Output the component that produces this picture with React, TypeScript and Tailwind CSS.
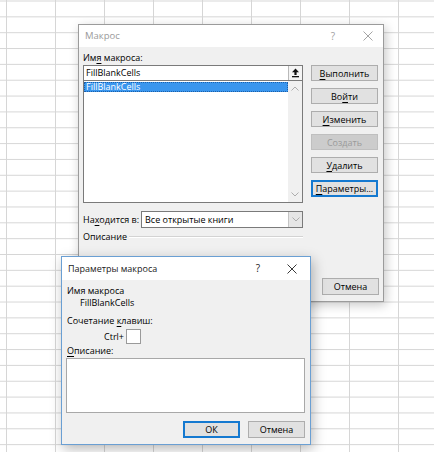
import clsx from "clsx";

/* Excel "Macro" dialog with the "Macro Options" child window on top of the sheet grid */

function U({ c }: { c: string }) {
  return <span className="underline underline-offset-[1.5px] decoration-[0.5px]">{c}</span>;
}

function Btn({
  children,
  disabled,
  focused,
  className,
}: {
  children: React.ReactNode;
  disabled?: boolean;
  focused?: boolean;
  className?: string;
}) {
  return (
    <div
      className={clsx(
        "flex items-center justify-center leading-none",
        disabled
          ? "bg-[#cccccc] border border-[#bfbfbf] text-[#9a9a9a]"
          : "bg-[#e1e1e1] text-black",
        !disabled && (focused ? "border-2 border-[#1479d0]" : "border border-[#adadad]"),
        className
      )}
    >
      {children}
    </div>
  );
}

function CloseX({ color }: { color: string }) {
  return (
    <svg width="10" height="10" viewBox="0 0 10 10">
      <path d="M0.5 0.5 L9.5 9.5 M9.5 0.5 L0.5 9.5" stroke={color} strokeWidth="0.9" fill="none" />
    </svg>
  );
}

function Chevron({ up }: { up?: boolean }) {
  return (
    <svg width="8" height="5" viewBox="0 0 8 5">
      <path
        d={up ? "M0.5 4.5 L4 1 L7.5 4.5" : "M0.5 0.5 L4 4 L7.5 0.5"}
        stroke="#adadad"
        strokeWidth="1"
        fill="none"
      />
    </svg>
  );
}

export default function App() {
  return (
    <div
      className="
        relative w-[434px] h-[452px] overflow-hidden bg-white
        font-['Open_Sans',sans-serif] text-[9px] text-black
        bg-[linear-gradient(to_right,#d6d6d6_1px,transparent_1px),linear-gradient(to_bottom,#d6d6d6_1px,transparent_1px)]
        bg-size-[49px_15.85px] bg-position-[6px_0.5px]
      "
    >
      {/* ================= MACRO DIALOG ================= */}
      <div className="absolute left-[78px] top-[24px] w-[306px] h-[278px] flex flex-col border border-[#9b9b9b] bg-[#f0f0f0] shadow-[2px_3px_10px_rgba(0,0,0,0.22)]">
        {/* title bar */}
        <div className="h-[22px] shrink-0 bg-white flex items-center pl-[6px] pr-[10px]">
          <span className="text-[9.5px] text-[#9a9a9a]">Макрос</span>
          <span className="ml-auto mr-[28px] text-[10px] text-[#a0a0a0]">?</span>
          <CloseX color="#9a9a9a" />
        </div>

        <div className="flex-1 flex flex-col px-[4px]">
          <div className="flex gap-[8px]">
            {/* left column */}
            <div className="w-[220px]">
              <div className="h-[13px] mt-[5px] leading-[12px]">
                Им<U c="я" /> макроса:
              </div>

              <div className="h-[16px] flex bg-white border border-[#7a7a7a]">
                <div className="flex-1 pl-[2px] leading-[14px]">FillBlankCells</div>
                <div className="w-[14px] flex items-center justify-center border-l border-[#b9b9b9] bg-[#f4f4f4]">
                  <svg width="9" height="10" viewBox="0 0 9 10">
                    <path d="M4.5 0.5 L8 4.2 L5.6 4.2 L5.6 7 L3.4 7 L3.4 4.2 L1 4.2 Z" fill="#111" />
                    <rect x="1" y="8" width="7" height="1.3" fill="#111" />
                  </svg>
                </div>
              </div>

              <div className="h-[122px] flex bg-white border border-t-0 border-[#7a7a7a]">
                <div className="flex-1 pt-[1px]">
                  <div className="h-[10px] leading-[10px] bg-[#3a96ee] text-white pl-[2px] outline-dotted outline-1 outline-[#1d5fa8] -outline-offset-1">
                    FillBlankCells
                  </div>
                </div>
                <div className="w-[14px] bg-[#f0f0f0] flex flex-col items-center justify-between py-[5px]">
                  <Chevron up />
                  <Chevron />
                </div>
              </div>

              <div className="mt-[8px] h-[17px] flex items-center">
                <span className="w-[58px]">
                  На<U c="х" />одится в:
                </span>
                <div className="flex-1 h-full flex bg-white border border-[#7a7a7a]">
                  <div className="flex-1 pl-[3px] leading-[15px]">Все открытые книги</div>
                  <div className="w-[14px] flex items-center justify-center bg-[#e6e6e6] border-l border-[#c4c4c4]">
                    <Chevron />
                  </div>
                </div>
              </div>

              <div className="mt-[3px] h-[12px] flex items-center gap-[2px]">
                <span>Описание</span>
                <div className="flex-1 h-[2px] border-t border-[#d3d3d3] border-b border-b-white" />
              </div>
            </div>

            {/* right column: actions */}
            <div className="w-[67px] pt-[18px] flex flex-col gap-[7px]">
              <Btn className="h-[16px]">
                <U c="В" />ыполнить
              </Btn>
              <Btn className="h-[16px]">
                Во<U c="й" />ти
              </Btn>
              <Btn className="h-[16px]">
                <U c="И" />зменить
              </Btn>
              <Btn className="h-[16px]" disabled>
                Создать
              </Btn>
              <Btn className="h-[16px]">
                <U c="У" />далить
              </Btn>
              <Btn className="h-[17px]" focused>
                <U c="П" />араметры...
              </Btn>
            </div>
          </div>

          <div className="mt-auto pb-[6px] flex justify-end">
            <Btn className="w-[57px] h-[17px]">Отмена</Btn>
          </div>
        </div>
      </div>

      {/* ================= MACRO OPTIONS ================= */}
      <div className="absolute left-[61px] top-[256px] w-[250px] h-[189px] flex flex-col border border-[#6a9fd3] bg-[#f0f0f0] shadow-[2px_4px_12px_rgba(0,0,0,0.28)]">
        <div className="h-[23px] shrink-0 bg-white flex items-center pl-[6px] pr-[13px]">
          <span className="text-[9px] text-[#222]">Параметры макроса</span>
          <span className="ml-auto mr-[27px] text-[10px] text-[#222]">?</span>
          <CloseX color="#222" />
        </div>

        <div className="flex-1 flex flex-col px-[4px] pt-[5px]">
          <div className="h-[12px] leading-[12px] pl-[1px]">Имя макроса</div>
          <div className="h-[12px] leading-[12px] pl-[14px]">FillBlankCells</div>

          <div className="mt-[6px] h-[12px] leading-[12px] pl-[1px]">
            Сочетание <U c="к" />лавиш:
          </div>
          <div className="mt-[2px] h-[15px] flex items-center pl-[38px] gap-[2px]">
            <span>Ctrl+</span>
            <div className="w-[15px] h-[15px] bg-white border border-[#9a9a9a]" />
          </div>

          <div className="mt-[1px] h-[12px] leading-[12px] pl-[1px]">
            <U c="О" />писание:
          </div>
          <div className="mt-[1px] w-[239px] h-[55px] bg-white border border-[#a8a8a8]" />

          <div className="mt-[8px] w-[239px] flex justify-end gap-[8px]">
            <Btn className="w-[57px] h-[17px]" focused>
              ОК
            </Btn>
            <Btn className="w-[57px] h-[17px]">Отмена</Btn>
          </div>
        </div>
      </div>
    </div>
  );
}
